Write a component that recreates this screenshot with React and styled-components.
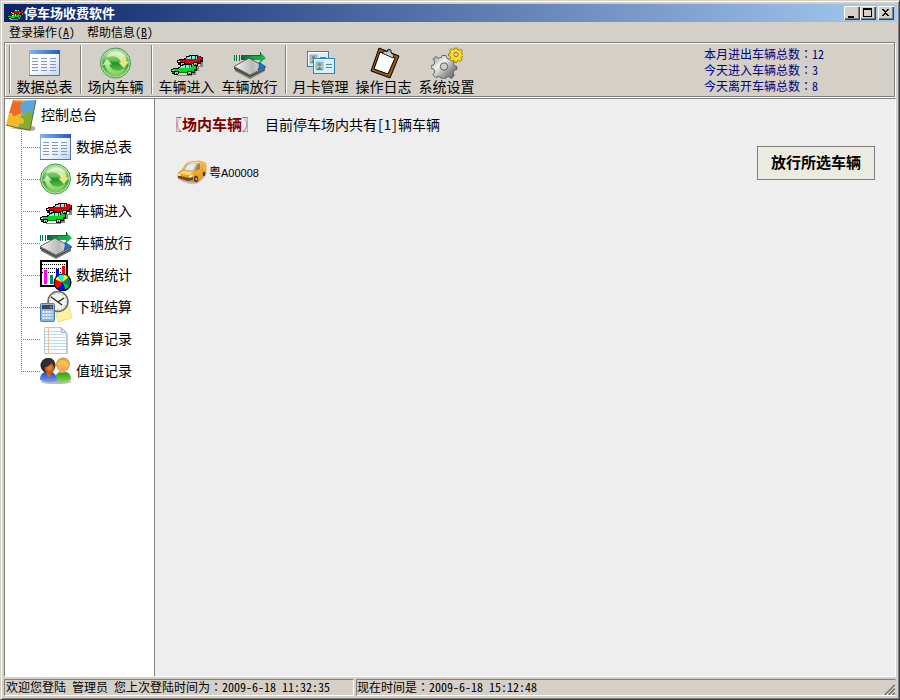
import React from 'react';
import styled, { createGlobalStyle, css } from 'styled-components';

const FACE = '#d4d0c8';
const SHADOW = '#808080';
const cjk = '"Noto Sans CJK SC", sans-serif';

const GlobalStyle = createGlobalStyle`
  * { box-sizing: border-box; }
  body { margin: 0; background: ${FACE}; }
  button { font: inherit; color: inherit; margin: 0; padding: 0; border: 0; background: none; cursor: default; }
  ul { list-style: none; margin: 0; padding: 0; }
  h1, h2, p { margin: 0; font-size: inherit; font-weight: inherit; }
  svg { display: block; flex: none; }
`;

const Window = styled.div`
  display: flex;
  flex-direction: column;
  min-height: 100vh;
  padding: 2px 1px 1px 2px;
  background: ${FACE};
  border: 1px solid;
  border-color: ${FACE} #404040 #404040 ${FACE};
  box-shadow: inset 1px 1px #fff, inset -1px -1px ${SHADOW};
  color: #000;
  font-family: ${cjk};
  font-size: 12px;
  line-height: 16px;
  font-feature-settings: "hwid";
`;

const TitleBar = styled.header`
  display: flex;
  align-items: center;
  height: 18px;
  margin: 1px;
  padding: 0 3px;
  gap: 1px;
  color: #fff;
  background: linear-gradient(90deg, #0a246a, #a6caf0);
`;

const Title = styled.h1`
  flex: 1;
  padding-bottom: 1px;
  font-size: 13px;
  font-weight: 700;
`;

const Captions = styled.div`
  display: flex;
  button:last-child { margin-left: 2px; }
`;

const CaptionButton = styled.button`
  width: 16px;
  height: 14px;
  color: #000;
  background: ${FACE};
  box-shadow: inset 1px 1px #fff, inset -1px -1px #404040, inset -2px -2px ${SHADOW};
`;

const MenuBar = styled.nav`
  display: flex;
  align-items: center;
  height: 19px;
  gap: 12px;
  padding: 0 0 2px 6px;
`;

const MenuButton = styled.button`
  line-height: 16px;
`;

const Toolbar = styled.div`
  display: flex;
  align-items: stretch;
  height: 55px;
  margin: 0 3px 0 1px;
  padding: 2px 0;
  border: 1px solid ${SHADOW};
  box-shadow: inset 1px 1px #fff, 1px 1px #fff;
`;

const Divider = styled.span`
  width: 2px;
  margin: 0 2px 0 4px;
  background: linear-gradient(90deg, ${SHADOW} 1px, #fff 1px);
`;

const ToolButton = styled.button`
  display: flex;
  flex-direction: column;
  align-items: center;
  width: 63px;
  padding-top: 2px;
  font-size: 14px;
  line-height: 14px;
`;

const Stats = styled.div`
  width: 190px;
  margin-left: auto;
  padding-top: 1px;
  color: #000080;
`;

const Colon = styled.span`
  font-family: "Noto Sans CJK TC", sans-serif;
  font-feature-settings: normal;
`;

const Body = styled.div`
  display: flex;
  flex: 1;
  margin: 1px 2px 2px 1px;
  border: 1px solid;
  border-color: ${SHADOW} #fff #fff ${SHADOW};
`;

const Sidebar = styled.aside`
  flex: none;
  width: 150px;
  background: #fff;
  border-right: 1px solid ${SHADOW};
  font-size: 14px;
`;

const TreeButton = styled.button`
  display: flex;
  align-items: center;
  height: 32px;
  gap: 4px;
`;

const TreeText = styled.span`
  padding-bottom: 2px;
`;

const TreeRow = styled.li`
  display: flex;
  margin-left: 16px;
`;

const dots = dir => `repeating-linear-gradient(${dir}, #808080 0 1px, transparent 1px 2px)`;

const Branch = styled.span`
  width: 19px;
  height: 32px;
  background:
    ${dots('180deg')} 0 0 / 1px ${p => (p.$last ? '17px' : '32px')} no-repeat,
    ${dots('90deg')} 0 16px / 19px 1px no-repeat;
`;

const Main = styled.main`
  flex: 1;
  display: flex;
  justify-content: space-between;
  align-items: flex-start;
  padding: 15px 20px 20px 12px;
  background: #eee;
`;

const Heading = styled.h2`
  display: flex;
  align-items: center;
  gap: 8px;
  font-size: 14px;
  line-height: 20px;
`;

const Section = styled.strong`
  color: #800000;
  font-size: 15px;
`;

const Vehicles = styled.ul`
  padding: 22px 0 0 8px;
`;

const Vehicle = styled.button`
  display: flex;
  align-items: center;
  gap: 2px;
`;

const Plate = styled.span`
  line-height: 16px;
`;

const PlateCode = styled.span`
  font: 11px "Liberation Sans", Arial, sans-serif;
`;

const ReleaseButton = styled.button`
  width: 118px;
  height: 34px;
  margin-top: 32px;
  padding-bottom: 2px;
  border: 1px solid ${SHADOW};
  background: #ebebe2;
  font-size: 15px;
  font-weight: 700;
`;

const StatusBar = styled.footer`
  display: flex;
  gap: 2px;
  margin: 0 2px 2px 1px;
`;

const StatusPanel = styled.p`
  height: 17px;
  line-height: 13px;
  border: 1px solid;
  border-color: ${SHADOW} #fff #fff ${SHADOW};
  white-space: nowrap;
  ${p => (p.$grow
    ? css`flex: 1; display: flex; justify-content: space-between; border-right-color: ${FACE};`
    : css`width: 350px; padding-left: 1px;`)}
`;

const Grip = styled.svg`
  align-self: flex-end;
`;

const Svg = ({ size = 32, ...p }) => (
  <svg width={size} height={size} viewBox="0 0 32 32" aria-hidden="true" {...p} />
);

const TableIcon = () => (
  <Svg>
    <defs>
      <linearGradient id="tb" x2="1" y2="1"><stop stopColor="#fff" /><stop offset=".5" stopColor="#f7fbff" /><stop offset="1" stopColor="#bcd3f5" /></linearGradient>
      <linearGradient id="th"><stop stopColor="#82b4f5" /><stop offset="1" stopColor="#2858bd" /></linearGradient>
    </defs>
    <rect x=".5" y="3.5" width="30" height="25" fill="url(#tb)" stroke="#8fa9d6" />
    <rect x="0" y="3" width="31" height="4" fill="url(#th)" />
    <path d="M0 28.500h30.500V7" fill="none" stroke="#5570a6" />
    <path d="M3 11.5h6m3 0h6m3 0h6M3 14.5h6m3 0h6m3 0h6M3 17.5h6m3 0h6m3 0h6M3 20.5h6m3 0h6m3 0h6M3 23.5h6m3 0h6m3 0h6" stroke="#8796b5" />
  </Svg>
);

const RefreshIcon = () => (
  <Svg>
    <defs>
      <linearGradient id="rf" x2="0" y2="1"><stop stopColor="#b8e8a5" /><stop offset=".42" stopColor="#5dbd4d" /><stop offset=".5" stopColor="#1e9226" /><stop offset="1" stopColor="#8edf62" /></linearGradient>
      <linearGradient id="ra" x2="0" y2="1"><stop stopColor="#d6f3c6" /><stop offset="1" stopColor="#8fd268" /></linearGradient>
    </defs>
    <circle cx="15.5" cy="16" r="15" fill="#c5e8b4" stroke="#39964a" />
    <circle cx="15.5" cy="16" r="13.2" fill="url(#rf)" stroke="#69b65a" strokeWidth=".8" />
    <path d="M2.500 18 7 12l5 5.500H9.500c1 5 6 7.500 11 6l5-2.500c-4 7-14 8-18.500 1.500A9 9 0 0 1 5 18z" fill="url(#ra)" />
    <path d="M6 11C10 4 20 2 25 9q1.500 3 1.500 5.500H29L24 21l-5.500-5.500H21C20 10 13 7 6 11z" fill="#d3efae" />
    <path d="M23 9q3 2.500 2.500 6.500H28L24 20l-4.500-4.500h3q.5-3 .5-6.500z" fill="#f6e170" />
    <path d="M4 10Q10 1 18 3q6 1 9 7Q15 5 4 10z" fill="#fff" opacity=".3" />
  </Svg>
);

const Car = ({ x, y, color, dark }) => (
  <g transform={`translate(${x} ${y})`}>
    <path d="M0 5h2V4h5V3h2V1h3V0h9v1h3v1h2v5h-2v2h-3v2h-5V9H8v1H7v1H3v-1H1V8H0z" fill="#000" />
    <path d="M2 5h6V4h3V3h11V2h3v3h-2v2h-7v1H8V7H1V6h1z" fill={color} />
    <path d="M12 1h2v1h-2zM21 1h2v2h-2z" fill={color} />
    <path d="M9 3h1V2h3V1h7v3H9z" fill="#7deef2" />
    <path d="M14 1h1v3h-1zM18 1h1v3h-1z" fill={dark} />
    <path d="M1 8h2v1H1zM8 8h8v1H8zM21 7h3v1h-3z" fill={dark} />
    <path d="M4 8h3v2H4zM17 8h3v2h-3z" fill="#c0c0c0" />
    <path d="M5 9h1v1H5zM18 9h1v1h-1z" fill="#333" /><path d="M1 6h2v1H1z" fill="#fff" />
  </g>
);

const CarsIcon = ({ size }) => (
  <Svg size={size} shapeRendering="crispEdges">
    <path d="M14 19h15v-4h3v5h-4v4h-3v4h-4v1H6v-1h13z" fill="#8a8780" />
    <Car x={6} y={8} color="#e00000" dark="#850000" />
    <Car x={0} y={17} color="#00d820" dark="#007b12" />
  </Svg>
);

const ReleaseIcon = () => (
  <Svg>
    <defs><linearGradient id="rl" x2="1"><stop stopColor="#f4f4f4" /><stop offset=".6" stopColor="#b8b8b8" /><stop offset="1" stopColor="#e6e6e6" /></linearGradient>
      <linearGradient id="rg"><stop stopColor="#06643a" /><stop offset=".5" stopColor="#16a348" /><stop offset="1" stopColor="#20b558" /></linearGradient></defs>
    <path d="M.5 8v6m2-6v6m3-6v6" stroke="#087344" />
    <path d="M7 8h19V5l6 6-6 5v-3H7z" fill="url(#rg)" />
    <path d="M26.500 5v3.500H8" fill="none" stroke="#066b35" />
    <path d="m1 22 15 7 15-7v2l-15 8-15-8z" fill="#777" />
    <path d="M0 19.500 15 11l16 9-15 8z" fill="url(#rl)" stroke="#444" strokeWidth=".8" />
    <path d="m0 20 16 8.500L31 21v1.500L16 30 0 22z" fill="#444" />
    <path d="m25 15 7 5-8 3q2-4 1-8z" fill="#087ed1" stroke="#023f78" strokeWidth=".6" />
  </Svg>
);

const ChartIcon = () => (
  <Svg>
    <path d="M1 2h26v25H1z" fill="#fff" stroke="#000" strokeWidth="2" />
    <path d="M2 5.500h24M2 9.500h24M2 13.500h24" stroke="#000" strokeDasharray="1 1" />
    <path d="M4 11h3v14H4z" fill="#f0f" /><path d="M10 16h3v9h-3z" fill="#008080" /><path d="M16 10h3v15h-3z" fill="#00f" /><path d="M22 7h3v18h-3z" fill="red" />
    <g transform="translate(22.500 23.500)">
      <circle r="9" />
      <path d="M0 0-5-6A8 8 0 0 1 1-8z" fill="#0ff" /><path d="M0 0 1-8A8 8 0 0 1 6-5z" fill="#ff0" />
      <path d="m0 0 6-5a8 8 0 0 1 1 8z" fill="#008080" /><path d="m0 0 7 3A8 8 0 0 1 3 7z" fill="#0c3" />
      <path d="m0 0 3 7a8 8 0 0 1-8-1z" fill="#00f" /><path d="m0 0-5 6a8 8 0 0 1-2-9z" fill="red" />
      <path d="m0 0-7-3a8 8 0 0 1 2-3z" fill="#ff0" />
    </g>
  </Svg>
);

const ClockIcon = () => (
  <Svg>
    <path d="m15 17 14-2 3 12-14 4z" fill="#fbf3a0" stroke="#e0d681" strokeWidth=".7" />
    <circle cx="18" cy="10.500" r="10" fill="#f3f3ed" stroke="#656565" strokeWidth="1.500" />
    <circle cx="18" cy="10.500" r="8" fill="none" stroke="#888" strokeDasharray="1 3.190" />
    <path d="m11 6 7 5 6-4m-6 4 4 3" fill="none" stroke="#222" strokeWidth="1.200" />
    <rect x=".5" y="12.500" width="14" height="18" rx="1" fill="#8eb2e0" stroke="#5379ae" />
    <rect x="2" y="14" width="11" height="4" fill="#35465f" /><path d="M10 15h2v2h-2z" fill="#dd5544" />
    <path d="M2.500 21h10M2.500 24h10M2.500 27h10" stroke="#f1f6ff" strokeWidth="2" strokeDasharray="2 1" />
  </Svg>
);

const DocIcon = () => (
  <Svg>
    <path d="M6 6h17l5 5v20H6z" fill="#999" opacity=".5" />
    <path d="M4.500 4.500H21l5.500 5v21h-22z" fill="#fafcff" stroke="#bfc8d0" />
    <path d="M5 8.500h15M5 11.500h21M5 14.500h21M5 17.500h21M5 20.500h21M5 23.500h21M5 26.500h21" stroke="#bfdced" />
    <path d="M8.500 5v25" stroke="#efc1a5" /><path d="M21 4.500v5h5z" fill="#dfe5ec" stroke="#a9b0b9" />
  </Svg>
);

const PeopleIcon = () => (
  <Svg>
    <defs>
      <linearGradient id="pb" x2="0" y2="1"><stop stopColor="#2445bd" /><stop offset="1" stopColor="#72a5ff" /></linearGradient>
      <linearGradient id="pg" x2="0" y2="1"><stop stopColor="#279b24" /><stop offset="1" stopColor="#8add3f" /></linearGradient>
      <radialGradient id="pf"><stop stopColor="#f08a35" /><stop offset="1" stopColor="#b34b10" /></radialGradient>
    </defs>
    <ellipse cx="16" cy="27" rx="15" ry="2" fill="#bbb" />
    <path d="M15 26q0-9 6-9h4q6 0 6 8-8 4-16 1z" fill="url(#pg)" />
    <circle cx="23" cy="9.500" r="7" fill="#dda33b" /><ellipse cx="22.500" cy="12" rx="5" ry="6" fill="#ffa75b" />
    <path d="M17 10q1-5 5-5 7 0 7 7-5 0-7-4-2 3-5 2z" fill="#f0c552" />
    <path d="M0 25q0-7 5-8h6q6 1 6 9-8 3-17-1z" fill="url(#pb)" />
    <path d="m6 18 3 5 3-5z" fill="#d86b20" />
    <circle cx="8" cy="10.500" r="7.500" fill="#27201d" /><ellipse cx="9.500" cy="13" rx="5" ry="6" fill="url(#pf)" />
    <path d="M2 13q8-1 10-6 0 3 3 5 1-9-7-9-7 0-6 10z" fill="#342d2a" />
  </Svg>
);

const CardsIcon = () => (
  <Svg>
    {[[2, 4], [8, 11]].map(([x, y]) => (
      <g key={x} transform={`translate(${x} ${y})`}>
        <rect x=".5" y=".5" width="21" height="15" fill="#dceff8" stroke="#2d86b8" />
        <path d="M1.500 14V1.500H20" fill="none" stroke="#fff" />
        <rect x="3" y="4" width="7" height="8" fill="#9dcbe3" stroke="#5a9fc3" strokeWidth=".6" />
        <circle cx="6.500" cy="6.500" r="1.800" fill="#b67d55" /><path d="M4 12q2.500-6 5 0z" fill="#578c5f" />
        <path d="M13 6.500h6M13 9.500h6" stroke="#438db6" />
      </g>
    ))}
  </Svg>
);

const ClipboardIcon = () => (
  <Svg>
    <path d="m11 1 20 8-9 22L3 24z" fill="#965710" stroke="#000" strokeLinejoin="round" />
    <path d="m12 5 15 6-7 16L6 22z" fill="#fff" stroke="#000" />
    <path d="m14 6 3-2 2 1 1-3 3 1v3l3 2-1 3z" fill="#ccc" stroke="#000" strokeWidth=".8" />
    <path d="M20.500 4h1" stroke="#000" />
  </Svg>
);

const Gear = ({ x, y, r, fill, stroke }) => (
  <g transform={`translate(${x} ${y}) scale(${r / 12})`}>
    <path fillRule="evenodd" d="M-2-12h4l1 3 3 1 3-2 3 3-2 3 1 3 3 1v3l-3 1-1 3 1 3-3 3-3-2-3 1-1 3h-3l-1-3-3-1-3 1-3-3 2-3-1-3-3-1v-3l3-1 1-3-2-3 3-3 3 2 3-1zM0-4a4 4 0 1 0 0 8 4 4 0 0 0 0-8z" fill={fill} stroke={stroke} />
  </g>
);

const GearsIcon = () => (
  <Svg>
    <defs><linearGradient id="gg" x2="1" y2="1"><stop stopColor="#888" /><stop offset=".35" stopColor="#f2f2f2" /><stop offset=".65" stopColor="#999" /><stop offset="1" stopColor="#555" /></linearGradient></defs>
    <Gear x={13} y={19.5} r={11} fill="url(#gg)" stroke="#555" />
    <Gear x={25} y={7.5} r={6.5} fill="#ffd91e" stroke="#4f3b00" />
  </Svg>
);

const PuzzleIcon = () => (
  <Svg>
    <path d="m5 29 20 3q7 0 5-4l-5-2z" fill="#777" opacity=".6" />
    <path d="m8 1 11 .5-3 14L4 14z" fill="#ed6b24" />
    <path d="m19 1.500 12-.5-3 15-12-.5z" fill="#5aa5dc" />
    <path d="m4 14 12 1.500L13 29 1 26z" fill="#f4b92a" />
    <path d="m16 15.500 12 .5-3 15-12-2z" fill="#82ad32" />
    <circle cx="18" cy="7" r="3" fill="#5aa5dc" /><circle cx="10" cy="14" r="3" fill="#ed6b24" />
    <circle cx="16" cy="22" r="3" fill="#f4b92a" /><circle cx="23" cy="15" r="3" fill="#82ad32" />
    <path d="m31 1-6 30-12-2-12-3" fill="none" stroke="#656d27" />
    <path d="M9 2h9" stroke="#ffb36e" />
  </Svg>
);

const VanIcon = () => (
  <Svg>
    <defs><linearGradient id="vb" x2="0" y2="1"><stop stopColor="#ffc64d" /><stop offset="1" stopColor="#e88f0c" /></linearGradient></defs>
    <path d="M3 23q8 6 18 5 9-5 10-10l-6 2z" fill="#aaa" opacity=".7" />
    <path d="m3 17 4-3 4-6q2-2 6-2.500L24 5l6 2 1 2v9l-3 2-5 6-10-1-10-3z" fill="url(#vb)" stroke="#c98a2a" strokeWidth=".6" />
    <path d="m9 14 4-6q5-1.500 9-1l-4 8z" fill="#e4ecf0" stroke="#9aa5aa" strokeWidth=".6" />
    <path d="m20 15 2.500-7L25 7.500V13z" fill="#7d8785" />
    <path d="m12 6.500 10-1 3 1-9 .5z" fill="#ffe0a0" />
    <path d="M27 8v9" stroke="#d98a10" strokeWidth=".7" />
    <path d="m4 17 5-2 9 1-3 3q-6 0-11-2z" fill="#ffd66b" />
    <path d="m3 19.500 11 2.500 4-1v3l-5 1-10-3z" fill="#6b4a20" />
    <path d="m3 17.500 3 1-1 1.500-2-.5zm11 2.500 4-1.500-1 2.500-3 .5z" fill="#fff5cc" />
    <ellipse cx="21" cy="23" rx="2" ry="3.200" fill="#3b3b3b" /><ellipse cx="29" cy="18" rx="1.300" ry="2.300" fill="#3b3b3b" />
    <ellipse cx="21.300" cy="23" rx=".9" ry="1.500" fill="#bbb" />
  </Svg>
);

const toolGroups = [
  [['数据总表', TableIcon]],
  [['场内车辆', RefreshIcon]],
  [['车辆进入', CarsIcon], ['车辆放行', ReleaseIcon]],
  [['月卡管理', CardsIcon], ['操作日志', ClipboardIcon], ['系统设置', GearsIcon]],
];

const treeItems = [
  ['数据总表', TableIcon], ['场内车辆', RefreshIcon], ['车辆进入', CarsIcon], ['车辆放行', ReleaseIcon],
  ['数据统计', ChartIcon], ['下班结算', ClockIcon], ['结算记录', DocIcon], ['值班记录', PeopleIcon],
];

const stats = [['本月进出车辆总数', 12], ['今天进入车辆总数', 3], ['今天离开车辆总数', 8]];

const captions = [
  ['最小化', <path key="p" d="M4 10h6v2H4z" />],
  ['最大化', <path key="p" fillRule="evenodd" d="M3 2h9v9H3zm1 2v6h7V4z" />],
  ['关闭', <path key="p" d="M4 3h2v1h1v1h1V4h1V3h2v1h-1v1H9v1H8v1h1v1h1v1h1v1H9V9H8V8H7v1H6v1H4V9h1V8h1V7h1V6H6V5H5V4H4z" />],
];

export default function App() {
  return (
    <>
      <GlobalStyle />
      <Window lang="zh-CN">
        <TitleBar>
          <CarsIcon size={16} />
          <Title>停车场收费软件</Title>
          <Captions>
            {captions.map(([name, shape]) => (
              <CaptionButton key={name} aria-label={name}>
                <svg width="16" height="14" shapeRendering="crispEdges">{shape}</svg>
              </CaptionButton>
            ))}
          </Captions>
        </TitleBar>
        <MenuBar>
          <MenuButton>登录操作(<u>A</u>)</MenuButton>
          <MenuButton>帮助信息(<u>B</u>)</MenuButton>
        </MenuBar>
        <Toolbar>
          {toolGroups.map((group, i) => (
            <React.Fragment key={i}>
              <Divider />
              {group.map(([label, Icon]) => (
                <ToolButton key={label}><Icon />{label}</ToolButton>
              ))}
            </React.Fragment>
          ))}
          <Stats>
            {stats.map(([label, n]) => <p key={label}>{label}<Colon lang="zh-TW">：</Colon>{n}</p>)}
          </Stats>
        </Toolbar>
        <Body>
          <Sidebar>
            <TreeButton><PuzzleIcon /><TreeText>控制总台</TreeText></TreeButton>
            <ul>
              {treeItems.map(([label, Icon], i) => (
                <TreeRow key={label}>
                  <Branch $last={i === treeItems.length - 1} />
                  <TreeButton><Icon /><TreeText>{label}</TreeText></TreeButton>
                </TreeRow>
              ))}
            </ul>
          </Sidebar>
          <Main>
            <div>
              <Heading><Section>〖场内车辆〗</Section>目前停车场内共有[1]辆车辆</Heading>
              <Vehicles>
                <li><Vehicle><VanIcon /><Plate>粤<PlateCode>A00008</PlateCode></Plate></Vehicle></li>
              </Vehicles>
            </div>
            <ReleaseButton>放行所选车辆</ReleaseButton>
          </Main>
        </Body>
        <StatusBar>
          <StatusPanel>欢迎您登陆 管理员 您上次登陆时间为<Colon lang="zh-TW">：</Colon>2009-6-18 11:32:35</StatusPanel>
          <StatusPanel $grow>
            <span>现在时间是<Colon lang="zh-TW">：</Colon>2009-6-18 15:12:48</span>
            <Grip width="12" height="12" aria-hidden="true">
              <path d="M0 12 12 0M4 12l8-8M8 12l4-4" stroke="#fff" />
              <path d="M1.500 12 12 1.500M5.500 12 12 5.500M9.500 12 12 9.500" stroke="#808080" strokeWidth="2" />
            </Grip>
          </StatusPanel>
        </StatusBar>
      </Window>
    </>
  );
}
